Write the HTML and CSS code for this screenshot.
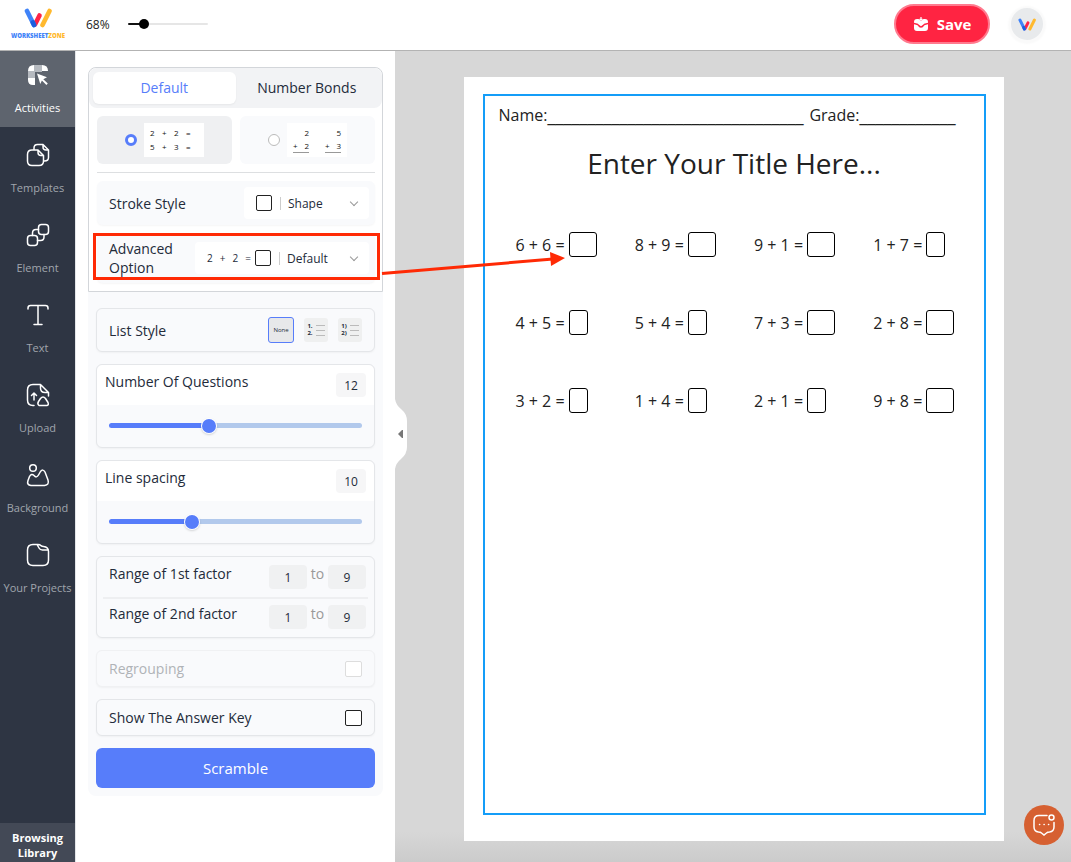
FILE: index.html
```html
<!DOCTYPE html>
<html lang="en">
<head>
<meta charset="utf-8">
<title>Worksheet Zone</title>
<link rel="stylesheet" href="styles.css">
</head>
<body>
<svg class="sprite" aria-hidden="true">
  <symbol id="mark" viewBox="0 0 28 20">
    <g fill="none" stroke-width="4.6" stroke-linecap="round">
      <path d="M15.500 7.500L11 16.500" stroke="#ff2447"/>
      <path d="M3 3L10 17" stroke="#3f83f8"/>
      <path d="M8.800 14.500L10 17" stroke="#1d5fe0"/>
      <path d="M25.500 3L18.500 17" stroke="#ffb92e"/>
    </g>
  </symbol>
</svg>
<header class="topbar">
  <a class="brand" href="#" aria-label="Worksheet Zone">
    <svg class="brand-mark"><use href="#mark"/></svg>
    <span class="brand-name">WORKSHEET<span class="brand-zone">ZONE</span></span>
  </a>
  <label class="zoom-label" for="zoom">68%</label>
  <input class="zoom" id="zoom" type="range" min="0" max="100" value="15">
  <button class="save" type="button">
    <svg class="save-icon" viewBox="0 0 16 16"><path fill="#fff" d="M4 3h1.500L8 5l2.500-2H12q3 0 3 3v.8l-3 .6q-1 .2-1.600 1L8 10.300 5.600 8.400Q5 7.600 4 7.400L1 6.800V6q0-3 3-3zM1 8.200l2.800.7q.6.100 1 .7Q6 11.800 8 11.800t3.200-2.200q.4-.6 1-.7L15 8.200V12q0 3-3 3H4q-3 0-3-3z"/><path d="M8 1v2.500M6.500 3L8 4.200 9.500 3" fill="none" stroke="#fff" stroke-width="1.200"/></svg>
    Save
  </button>
  <button class="avatar" type="button" aria-label="Account"><svg class="avatar-mark"><use href="#mark"/></svg></button>
</header>
<div class="shell">
  <nav class="rail">
    <a class="rail-item active" href="#">
      <svg class="rail-icon" viewBox="0 0 24 24"><path fill="#fff" d="M2 15h7v7H7q-5 0-5-5zM2 8q0-6 6-6v6zM16 2q6 0 6 6h-6z"/><path fill="#b6bac0" d="M8 2h8v7H8zM2 8h7v7H2z"/><path fill="#fff" d="M11 10.500l10 3.800-3.700 1.900 4.500 4.400-1.400 1.400-4.500-4.500-1.600 3.600z"/></svg>
      Activities</a>
    <a class="rail-item" href="#">
      <svg class="rail-icon line" viewBox="0 0 24 24"><path d="M8 6V5q0-3.500 3.500-3.500H17L22.500 7v7.500q0 3.500-4 3.500M17 1.500V4q0 3 3 3h2.500M6 7h6l5.500 5.500V18q0 4.500-4.500 4.500H6Q1.500 22.500 1.500 18v-6.500Q1.500 7 6 7zM12 7v2.500q0 3 3 3h2.500"/></svg>
      Templates</a>
    <a class="rail-item" href="#">
      <svg class="rail-icon line" viewBox="0 0 24 24"><rect x="12.500" y="1.500" width="10" height="10" rx="3"/><rect x="1.500" y="12.500" width="10" height="10" rx="3"/><path d="M6.500 12.500V10q0-3.500 3.500-3.500h2.500M18 11.500V14q0 3.500-3.500 3.500h-3"/></svg>
      Element</a>
    <a class="rail-item" href="#">
      <svg class="rail-icon line" viewBox="0 0 24 24"><path d="M2 6V5q0-2.500 2.500-2.500h15Q22 2.500 22 5v1M12 2.500v19M8 21.500h8"/></svg>
      Text</a>
    <a class="rail-item" href="#">
      <svg class="rail-icon line" viewBox="0 0 24 24"><path d="M8 22.500H7Q1.500 22.500 1.500 17V7Q1.500 1.500 7 1.500h7.500l8 8V13M14.500 1.500V5q0 4.500 4.500 4.500h3.500M8 17v-6.500M5.500 12.500L8 10l2.500 2.500M13 22.500q-2-1.500-.5-4l2-3q2.500-3 5 0l2.500 4q1 2.500-1 3z"/></svg>
      Upload</a>
    <a class="rail-item" href="#">
      <svg class="rail-icon line" viewBox="0 0 24 24"><circle cx="7" cy="5" r="3.300"/><path d="M5 22.500q-4.500-.5-3-5l1.500-4q2-3.500 4.500-1 2.500 3 4.500-.5l2-3.500q2.500-3 4.500.5l3 8q1.500 5-3.500 5.500z"/></svg>
      Background</a>
    <a class="rail-item" href="#">
      <svg class="rail-icon line" viewBox="0 0 24 24"><path d="M7 1.500h5q2 0 3 1.200Q16 3.500 17.500 3.500q5 .5 5 5V17q0 5.500-5.500 5.500H7q-5.500 0-5.500-5.500V7Q1.500 1.500 7 1.500zM11 1.500l2 3.500q1 2 3.500 2H22"/></svg>
      Your Projects</a>
    <a class="library" href="#">Browsing Library</a>
  </nav>

  <aside class="panel">
    <form class="options">
      <section class="mode">
        <div class="tabs" role="tablist">
          <button class="tab selected" type="button" role="tab" aria-selected="true">Default</button>
          <button class="tab" type="button" role="tab" aria-selected="false">Number Bonds</button>
        </div>
        <div class="mode-body">
          <div class="layouts">
            <label class="layout picked">
              <input class="radio" type="radio" name="layout" aria-label="Horizontal" checked>
              <span class="sample rows"><span>2</span><span>+</span><span>2</span><span>=</span><span>5</span><span>+</span><span>3</span><span>=</span></span>
            </label>
            <label class="layout">
              <input class="radio" type="radio" name="layout" aria-label="Vertical">
              <span class="sample stacks"><span class="stack">2<span class="sum"><span>+</span><span>2</span></span></span><span class="stack">5<span class="sum"><span>+</span><span>3</span></span></span></span>
            </label>
          </div>
          <div class="setting stroke">
            <label class="setting-name" for="stroke">Stroke Style</label>
            <span class="picker"><span class="box"></span><select class="select" id="stroke"><option>Shape</option></select></span>
          </div>
          <div class="setting advanced">
            <label class="setting-name" for="advanced">Advanced Option</label>
            <span class="picker wide"><span class="formula"><span>2</span><span>+</span><span>2</span><span>=</span></span><span class="box"></span><select class="select" id="advanced"><option>Default</option></select></span>
            <span class="highlight"></span>
          </div>
        </div>
      </section>

      <section class="card list-style">
        <span class="name">List Style</span>
        <button class="list-btn chosen" type="button">None</button>
        <button class="list-btn" type="button"><span class="nums">1.<br>2.</span><span class="lines"></span></button>
        <button class="list-btn" type="button"><span class="nums">1)<br>2)</span><span class="lines"></span></button>
      </section>

      <section class="card">
        <div class="slider-head"><label class="name" for="count">Number Of Questions</label><input class="value" type="text" value="12" aria-label="Question count"></div>
        <div class="slider-body"><input class="slider" id="count" type="range" min="0" max="100" value="39" style="--fill:39%"></div>
      </section>

      <section class="card">
        <div class="slider-head"><label class="name" for="spacing">Line spacing</label><input class="value" type="text" value="10" aria-label="Spacing value"></div>
        <div class="slider-body"><input class="slider" id="spacing" type="range" min="0" max="100" value="32" style="--fill:32%"></div>
      </section>

      <section class="card ranges">
        <div class="range"><label class="name" for="f1">Range of 1st factor</label><input class="value factor" id="f1" type="text" value="1"><span class="to">to</span><input class="value factor" type="text" value="9" aria-label="1st factor maximum"></div>
        <div class="range"><label class="name" for="f2">Range of 2nd factor</label><input class="value factor" id="f2" type="text" value="1"><span class="to">to</span><input class="value factor" type="text" value="9" aria-label="2nd factor maximum"></div>
      </section>

      <label class="card check disabled">Regrouping<input class="tick" type="checkbox" disabled></label>
      <label class="card check">Show The Answer Key<input class="tick" type="checkbox"></label>
      <button class="scramble" type="button">Scramble</button>
    </form>
    <button class="collapse" type="button" aria-label="Collapse panel">
      <svg class="collapse-shape" viewBox="0 0 12 70"><path fill="#fff" d="M0 0q1 6 6 10 6 5 6 12v26q0 7-6 12-5 4-6 10z"/><path fill="#777" d="M3 35l4-4h1v8H7z"/></svg>
    </button>
  </aside>

  <main class="workspace">
    <article class="page">
      <div class="frame">
        <p class="fields"><span>Name:<span class="blank">________________________________</span></span><span>Grade:<span class="blank">____________</span></span></p>
        <h1 class="title">Enter Your Title Here...</h1>
        <div class="problems">
          <div class="problem">6 + 6 =<span class="answer two"></span></div>
          <div class="problem">8 + 9 =<span class="answer two"></span></div>
          <div class="problem">9 + 1 =<span class="answer two"></span></div>
          <div class="problem">1 + 7 =<span class="answer"></span></div>
          <div class="problem">4 + 5 =<span class="answer"></span></div>
          <div class="problem">5 + 4 =<span class="answer"></span></div>
          <div class="problem">7 + 3 =<span class="answer two"></span></div>
          <div class="problem">2 + 8 =<span class="answer two"></span></div>
          <div class="problem">3 + 2 =<span class="answer"></span></div>
          <div class="problem">1 + 4 =<span class="answer"></span></div>
          <div class="problem">2 + 1 =<span class="answer"></span></div>
          <div class="problem">9 + 8 =<span class="answer two"></span></div>
        </div>
      </div>
    </article>
    <button class="chat" type="button" aria-label="Chat">
      <svg class="chat-icon" viewBox="0 0 24 24"><path d="M15 2.500H7Q2 2.500 2 7.500V14q0 4.500 4.500 5 2 0 3 1l2.500 2 2.500-2q1-1 3-1Q22 18.500 22 14V9.500"/><circle cx="19.500" cy="4.500" r="2.500"/><path d="M7.500 11.500h.2M12 11.500h.2M16.500 11.500h.2"/></svg>
    </button>
  </main>
  <svg class="arrow" viewBox="0 0 184 28" aria-hidden="true"><path d="M1 21.500L172 7" stroke="#ff2a05" stroke-width="3"/><path d="M169 0l15 6-14 8z" fill="#ff2a05"/></svg>
</div>
</body>
</html>
```
FILE: styles.css
```css
* { box-sizing: border-box; }

body {
  margin: 0;
  min-height: 100vh;
  display: flex;
  flex-direction: column;
  font-family: "Open Sans", "Noto Sans", sans-serif;
  font-size: 14px;
  color: #232b3a;
  background: #fff;
}

button, input, select { font: inherit; color: inherit; margin: 0; }
button { border: 0; padding: 0; background: none; }
a { color: inherit; text-decoration: none; }
.sprite { display: none; }

/* Top bar */
.topbar {
  display: flex;
  align-items: center;
  height: 51px;
  border-bottom: 1px solid #b3b3b3;
  padding: 0 28px 2px 0;
}
.brand {
  width: 76px;
  display: flex;
  flex-direction: column;
  align-items: center;
  gap: 4px;
}
.brand-mark { width: 28px; height: 20px; }
.brand-name { font-size: 6px; line-height: 8px; font-weight: 800; color: #3f83f8; }
.brand-zone { color: #ffb92e; }
.zoom-label { width: 42px; margin-left: 10px; font-size: 12px; color: #222; }
.zoom { appearance: none; width: 80px; height: 12px; background: none; }
.zoom::-webkit-slider-runnable-track {
  height: 2px;
  border-radius: 1px;
  background: linear-gradient(to right, #111 15%, #e6e6e6 15%);
}
.zoom::-webkit-slider-thumb {
  appearance: none;
  width: 10px;
  height: 10px;
  margin-top: -4px;
  border-radius: 50%;
  background: #000;
}
.save {
  display: flex;
  align-items: center;
  justify-content: center;
  gap: 8px;
  width: 96px;
  height: 40px;
  margin-left: auto;
  border: 2px solid #ff7a8e;
  border-radius: 20px;
  background: #ff2442;
  color: #fff;
  font-size: 15px;
  font-weight: 700;
}
.save-icon { width: 16px; height: 16px; }
.avatar {
  display: grid;
  place-items: center;
  width: 32px;
  height: 32px;
  margin-left: 21px;
  border-radius: 50%;
  background: #e8eaec;
  box-shadow: 0 1px 2px 3px #fafafa;
}
.avatar-mark { width: 18px; height: 13px; }
.brand-mark, .avatar-mark { display: block; }

/* Body columns */
.shell { position: relative; flex: 1; display: flex; }

.rail {
  flex: none;
  width: 75px;
  display: flex;
  flex-direction: column;
  gap: 4px;
  background: #2e3543;
}
.rail-item {
  display: flex;
  flex-direction: column;
  align-items: center;
  gap: 13px;
  height: 76px;
  padding-top: 12px;
  font-size: 11px;
  line-height: 16px;
  white-space: nowrap;
  color: #a0a5ad;
}
.rail-item.active { background: #5e646e; color: #fff; }
.rail-icon { width: 24px; height: 24px; }
.rail-icon.line {
  fill: none;
  stroke: #fff;
  stroke-width: 1.5;
  stroke-linecap: round;
  stroke-linejoin: round;
}
.library {
  margin-top: auto;
  padding: 7px 8px 2px;
  background: #434956;
  color: #fff;
  font-size: 11px;
  font-weight: 700;
  line-height: 15px;
  text-align: center;
}

/* Options panel */
.panel {
  position: relative;
  flex: none;
  width: 320px;
  padding: 16px 12px 0;
  border-left: 1px solid #e3e5e8;
}
.options {
  display: flex;
  flex-direction: column;
  gap: 12px;
  padding-bottom: 8px;
  border-radius: 8px;
  background: #f9fafc;
}
.mode {
  margin-bottom: 4px;
  border: 1px solid #d3d6da;
  border-radius: 8px 8px 0 0;
  background: #fff;
}
.tabs {
  display: flex;
  height: 40px;
  padding: 4px;
  border-radius: 8px;
  background: #f2f3f5;
}
.tab { flex: 1; padding-bottom: 2px; border-radius: 6px; }
.tab.selected { background: #fff; color: #577dfa; box-shadow: 0 1px 2px #0000000d; }
.mode-body { padding: 8px 7px 8px 8px; }
.layouts {
  display: flex;
  gap: 8px;
  padding-bottom: 8px;
  margin-bottom: 8px;
  border-bottom: 1px solid #dddfe1;
}
.layout {
  flex: 1;
  display: flex;
  align-items: center;
  justify-content: center;
  gap: 7px;
  height: 48px;
  border-radius: 6px;
  background: #f9fafc;
}
.layout.picked { background: #eff0f2; }
.radio {
  appearance: none;
  width: 12px;
  height: 12px;
  border: 1px solid #bbb;
  border-radius: 50%;
  background: #fff;
}
.radio:checked { border: 3px solid #577dfa; }
.sample {
  width: 60px;
  height: 34px;
  padding: 3px 6px;
  background: #fff;
  font-size: 8px;
  line-height: 14px;
  color: #111;
}
.rows { display: grid; grid-template-columns: repeat(4, 1fr); }
.stacks { display: flex; justify-content: space-between; line-height: 13px; }
.stack { width: 16px; text-align: right; }
.sum { display: flex; justify-content: space-between; border-bottom: 1px solid #999; }
.setting {
  position: relative;
  display: flex;
  align-items: center;
  justify-content: space-between;
  padding: 0 6px 0 12px;
  border-radius: 6px;
  background: #f9fafc;
  box-shadow: 0 1px 2px #0000000a;
}
.stroke { height: 44px; }
.advanced { height: 50px; margin-top: 8px; }
.setting-name { line-height: 19px; width: 85px; }
.advanced .setting-name { width: 70px; }
.picker {
  position: relative;
  display: flex;
  align-items: center;
  width: 125px;
  height: 32px;
  padding: 0 8px 0 12px;
  border-radius: 4px;
  background: #fff;
}
.picker.wide { width: 174px; }
.picker::after {
  content: "";
  position: absolute;
  right: 12px;
  top: 12px;
  width: 5px;
  height: 5px;
  border: solid #999;
  border-width: 0 1px 1px 0;
  transform: rotate(45deg);
}
.formula {
  display: flex;
  justify-content: space-between;
  width: 44px;
  margin-right: 4px;
  font-size: 10px;
}
.box { flex: none; width: 16px; height: 16px; border: 1px solid #222; border-radius: 2px; }
.select {
  appearance: none;
  flex: 1;
  min-width: 0;
  height: 13px;
  margin-left: 8px;
  padding: 0 0 0 7px;
  border: 0;
  border-left: 1px solid #ccc;
  border-radius: 0;
  font-size: 12px;
  line-height: 13px;
  background: none;
}
.highlight {
  position: absolute;
  inset: 0 -5px 3px -4px;
  border: 3px solid #ff2a05;
  pointer-events: none;
}

.card {
  margin: 0 8px;
  border: 1px solid #e4e6e9;
  border-radius: 6px;
  background: #f9fafc;
  box-shadow: 0 1px 2px #0000000a;
}
.name { flex: 1; }
.list-style {
  display: flex;
  align-items: center;
  gap: 10px;
  height: 44px;
  padding: 0 12px;
}
.list-btn {
  display: flex;
  align-items: center;
  justify-content: center;
  gap: 3px;
  width: 24px;
  height: 24px;
  border-radius: 3px;
  background: #eff0f0;
  font-size: 6px;
  line-height: 7px;
}
.list-btn.chosen { width: 26px; height: 26px; border: 1px solid #577dfa; background: #e7e8ea; }
.nums { font-weight: 700; }
.lines {
  width: 9px;
  height: 11px;
  background: repeating-linear-gradient(#bbb 0 1px, transparent 1px 5px);
}
.slider-head {
  display: flex;
  align-items: flex-start;
  height: 40px;
  padding: 8px;
  border-radius: 6px 6px 0 0;
  background: #fff;
  line-height: 18px;
}
.value {
  width: 30px;
  height: 24px;
  padding: 0;
  border: 0;
  border-radius: 4px;
  background: #f6f6f7;
  font-size: 12px;
  text-align: center;
}
.slider-body { display: flex; align-items: center; height: 42px; padding: 0 12px 2px; }
.slider { appearance: none; width: 100%; height: 14px; background: none; }
.slider::-webkit-slider-runnable-track {
  height: 5px;
  border-radius: 3px;
  background: linear-gradient(to right, #577dfa var(--fill), #b2c9ec var(--fill));
}
.slider::-webkit-slider-thumb {
  appearance: none;
  width: 14px;
  height: 14px;
  margin-top: -4px;
  border-radius: 50%;
  background: #577dfa;
  box-shadow: 0 0 0 1px #fff, 0 1px 3px #0005;
}
.ranges { padding: 0 6px; }
.range {
  display: flex;
  align-items: flex-start;
  height: 40px;
  padding: 8px 2px 0 6px;
  line-height: 18px;
}
.range + .range { border-top: 2px solid #eeeff1; padding-top: 6px; }
.factor { width: 38px; background: #f0f1f2; }
.to { width: 21px; text-align: center; color: #999; }
.check {
  display: flex;
  align-items: center;
  justify-content: space-between;
  height: 37px;
  padding: 0 12px;
}
.check.disabled { color: #b0b3b7; border-color: #f0f1f3; }
.tick {
  appearance: none;
  width: 17px;
  height: 16px;
  border: 1px solid #222;
  border-radius: 2px;
  background: #fff;
}
.tick:disabled { border-color: #ddd; }
.scramble {
  height: 40px;
  margin: 0 8px;
  border-radius: 6px;
  background: #577dfa;
  color: #fff;
  font-size: 15px;
}
.collapse { position: absolute; z-index: 1; left: 100%; top: 348px; width: 12px; height: 70px; }
.collapse-shape { display: block; width: 12px; height: 70px; }

/* Worksheet */
.workspace {
  flex: 1;
  min-width: 0;
  padding: 26px 0 21px 1px;
  background: linear-gradient(#d7d7d7 calc(100% - 30px), #cbcbcb);
}
.page {
  width: 80%;
  min-height: 764px;
  margin: 0 auto;
  padding: 17px 18px 26px 19px;
  display: flex;
  background: #fff;
}
.frame { flex: 1; min-width: 0; padding: 8px 14px; border: 2px solid #149df8; color: #222; }
.fields {
  display: flex;
  gap: 6px;
  margin: 0;
  font-size: 16px;
  line-height: 22px;
  white-space: nowrap;
}
.blank { line-height: 16px; font-family: "DejaVu Sans", sans-serif; }
.title {
  margin: 18px 0 0;
  font-size: 28px;
  font-weight: 400;
  line-height: 38px;
  text-align: center;
}
.problems {
  display: grid;
  grid-template-columns: repeat(4, 1fr);
  row-gap: 53px;
  margin: 50px -23px 0 17px;
}
.problem { display: flex; align-items: center; gap: 4px; font-size: 16px; line-height: 24px; white-space: nowrap; }
.answer { width: 19px; height: 25px; border: 1px solid #000; border-radius: 3px; }
.answer.two { width: 28px; }

.chat {
  position: fixed;
  right: 7px;
  bottom: 17px;
  display: grid;
  place-items: center;
  width: 40px;
  height: 40px;
  border-radius: 50%;
  background: #d66031;
}
.chat-icon {
  width: 24px;
  height: 24px;
  fill: none;
  stroke: #fff;
  stroke-width: 1.5;
  stroke-linecap: round;
}
.arrow { position: absolute; left: 381px; top: 201px; width: 184px; height: 28px; pointer-events: none; }
```
